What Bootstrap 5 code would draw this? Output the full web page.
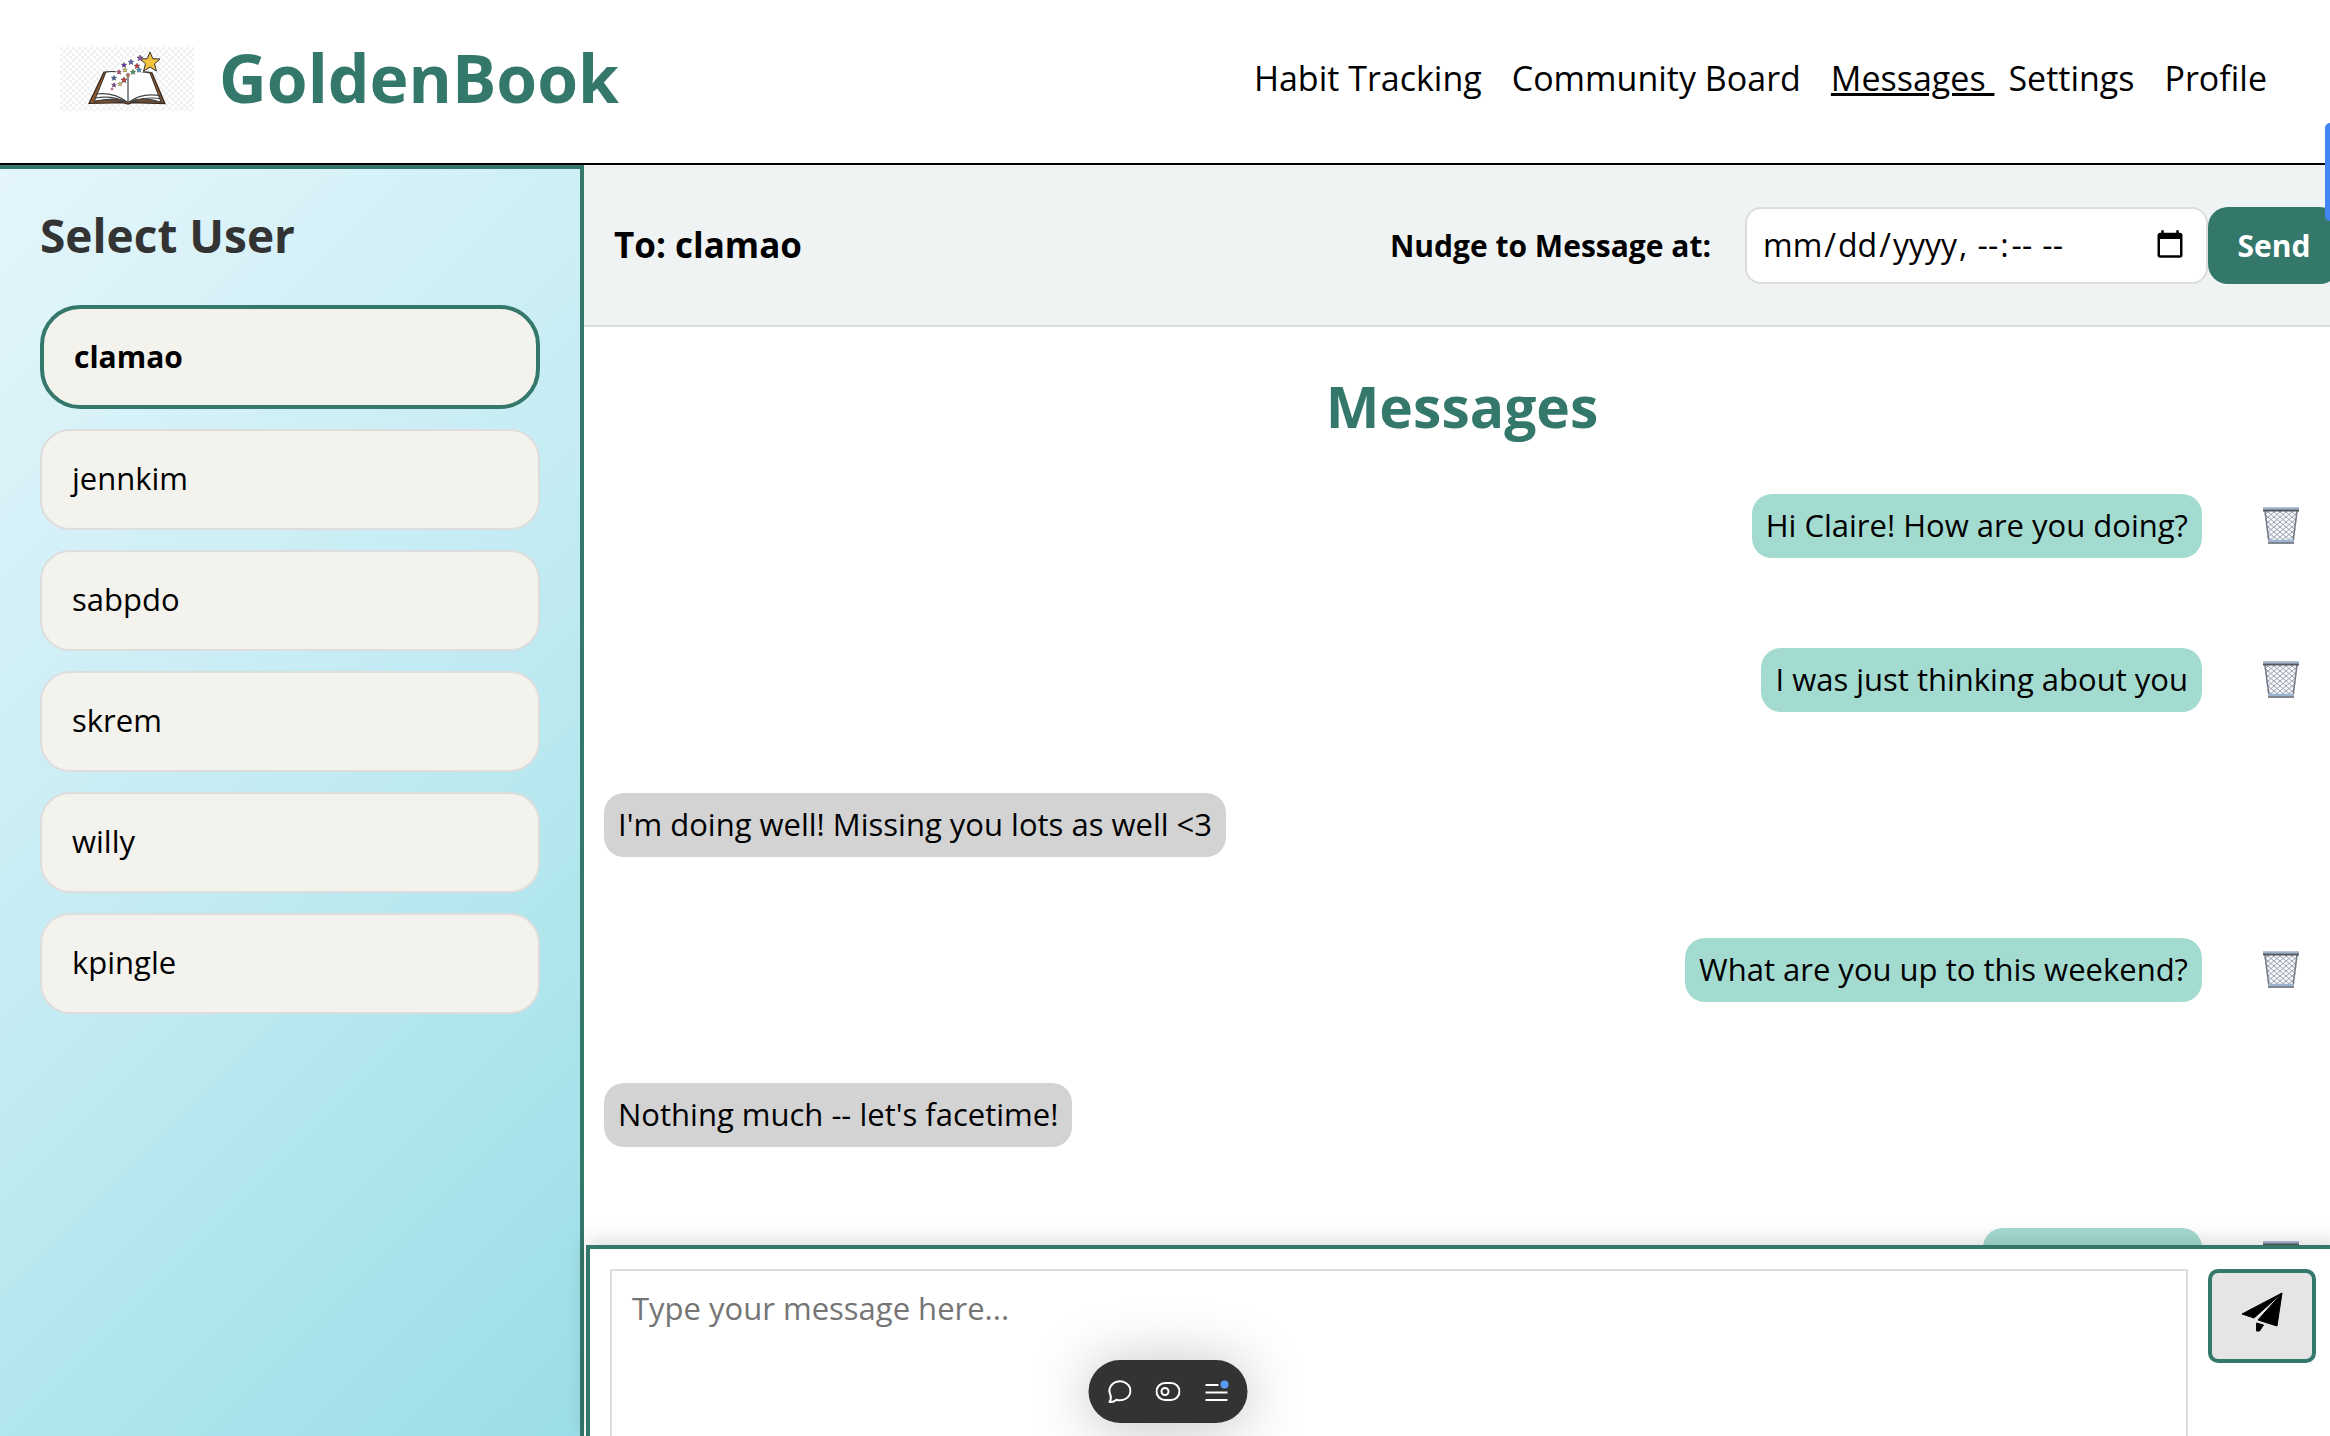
<!DOCTYPE html>
<html lang="en">
<head>
<meta charset="utf-8">
<meta name="viewport" content="width=device-width, initial-scale=1">
<title>GoldenBook - Messages</title>
<link href="https://cdn.jsdelivr.net/npm/bootstrap@5.3.0/dist/css/bootstrap.min.css" rel="stylesheet">
<style>
:root { --gb-green: #34786b; --gb-mint: #a4dbd1; --gb-line: #ddd; }
body { font-family: "Trebuchet MS", "Open Sans", sans-serif; font-size: 31px; line-height: 37px; color: #000; background: #fff; }
.site-header { height: 165px; border-bottom: 2px solid #000; padding: 0 63px 0 60px; }
.brand { gap: 25px; margin-top: -6px; }
.brand svg { width: 134px; height: 64px; }
.brand-name { font-size: 66px; line-height: 80px; font-weight: 700; color: var(--gb-green); margin-top: -4px; }
.site-nav { gap: 30px; font-size: 34px; line-height: 42px; margin-top: -8px; }
.site-nav a { color: #000; text-decoration: none; white-space: pre; }
.site-nav a.current { text-decoration: underline; text-decoration-thickness: 3px; margin-right: -16px; }
.user-pane { width: 584px; border-top: 4px solid var(--gb-green); border-right: 4px solid var(--gb-green); padding: 38px 40px; background: linear-gradient(135deg, #e4f6fb 0%, #c3ebf3 49%, #b2e6ed 69%, #9cdde7 100%); }
.user-pane h2 { font-size: 46px; line-height: 56px; font-weight: 700; color: #333; margin: 0 0 42px; }
.user-list { gap: 20px; }
.user-btn { border: 2px solid var(--gb-line); border-radius: 30px; background: #f3f2ec; padding: 29px 30px 31px; text-align: left; color: #000; }
.user-btn.chosen { border: 4px solid var(--gb-green); border-radius: 40px; font-weight: 700; font-size: 30px; line-height: 36px; padding: 30px; }
.chat { margin-right: -10px; }
.chat-bar { height: 162px; background: #f0f3f4; border-bottom: 2px solid var(--gb-line); padding-left: 30px; }
.chat-bar h3 { font-size: 35px; line-height: 40px; font-weight: 700; margin: 0; }
.nudge label { font-weight: 700; margin-right: 34px; font-size: 30px; }
.nudge input { width: 463px; height: 77px; border: 2px solid var(--gb-line); border-radius: 16px; padding: 0 20px 0 16px; background: #fff; color: #000; font-size: 32px; line-height: 48px; }
.nudge input::-webkit-datetime-edit { line-height: 48px; padding: 0; }
.nudge input::-webkit-datetime-edit-text { padding: 0 2px; }
.nudge input::-webkit-calendar-picker-indicator { width: 32px; height: 32px; padding: 0; }
.nudge button { width: 132px; height: 77px; border: 0; border-radius: 20px; background: var(--gb-green); color: #fff; font-weight: 700; font-size: 30px; }
.thread { min-height: 0; padding: 0 40px 0 20px; }
.thread h1 { font-size: 57px; line-height: 74px; font-weight: 700; color: var(--gb-green); margin: 42px -20px 51px 0; }
.msg { height: 64px; margin-bottom: 81px; gap: 60px; }
.msg.spaced { margin-bottom: 90px; }
.bubble { min-height: 64px; line-height: 36px; padding: 13px 14px 15px; border-radius: 20px; background: var(--gb-mint); }
.bubble.pending { width: 219px; }
.msg.theirs .bubble { background: #d3d3d3; }
.bin { border: 0; background: none; padding: 0; width: 38px; line-height: 0; }
.composer { height: 191px; flex: none; margin-left: 2px; border: 4px solid var(--gb-green); border-bottom: 0; background: #fff; padding: 20px 20px 0; gap: 20px; box-shadow: 0 -4px 20px rgba(0,0,0,.15); z-index: 1; }
.composer textarea { height: 200px; border: 2px solid var(--gb-line); padding: 18px 20px; resize: none; line-height: 38px; }
.composer textarea::placeholder { color: #757575; }
.composer button { width: 108px; height: 94px; flex: none; border: 4px solid var(--gb-green); border-radius: 10px; background: #e5e5e5; padding: 0 0 8px; line-height: 0; }
.side-tab { right: 0; top: 123px; width: 5px; height: 98px; background: #4285f4; border-radius: 8px 0 0 8px; z-index: 3; }
.dock { bottom: 13px; left: calc(50% + 3px); transform: translateX(-50%); width: 159px; height: 63px; border-radius: 32px; background: #333; box-shadow: 0 4px 60px rgba(0,0,0,.25); z-index: 4; gap: 24px; }
.dock button { border: 0; background: none; padding: 0; line-height: 0; }
</style>
<script src="https://cdn.jsdelivr.net/npm/bootstrap@5.3.0/dist/js/bootstrap.bundle.min.js"></script>
</head>
<body class="vh-100 overflow-hidden d-flex flex-column position-relative">
<svg width="0" height="0" class="position-absolute" aria-hidden="true">
  <defs>
    <pattern id="mesh" width="6" height="5" patternUnits="userSpaceOnUse"><path d="M0 0l6 5M6 0l-6 5" stroke="#99a2b2" stroke-width="1"/></pattern>
    <symbol id="bin" viewBox="0 0 38 38">
      <path d="M2 3h34l-4 32H6z" fill="#f8f9fb"/><path d="M2 3h34l-4 32H6z" fill="url(#mesh)"/>
      <path d="M3 4l4 31M35 4l-4 31" stroke="#737a86" stroke-width="1.5"/>
      <path d="M1 1.5h36" stroke="#9fb1cb" stroke-width="2.5"/><path d="M1 3.5h36" stroke="#55585e" stroke-width="2"/>
      <path d="M6 34h26" stroke="#9db3d0" stroke-width="2.5"/><path d="M6 36h26" stroke="#666c76" stroke-width="1.6"/>
    </symbol>
  </defs>
</svg>
<header class="site-header d-flex align-items-center justify-content-between flex-shrink-0">
  <div class="brand d-flex align-items-center">
    <svg viewBox="0 0 134 64" role="img" aria-label="Open book with stars">
      <defs><pattern id="checks" width="6" height="6" patternUnits="userSpaceOnUse"><path fill="#f1f1f1" d="M0 0h3v3H0zM3 3h3v3H3z"/></pattern>
      <path id="star" d="M0-10L2.8-3.3 10-3 4.5 1.8 6.4 9 0 5-6.4 9-4.5 1.8-10-3-2.8-3.3z"/></defs>
      <path fill="#fff" d="M0 0h134v64H0z"/><path fill="url(#checks)" d="M0 0h134v64H0z"/>
      <path d="M44 25L29 56.500l34-.8 5 1.500 4-1.500 33 1L92 26l-4-1z" fill="#8b572f" stroke="#33251c" stroke-width="1.200"/>
      <path d="M46 25q12-2 22 4 10-6 22-3l11 29q-19-6-33 0-14-6-34 0z" fill="#fff" stroke="#333" stroke-width="1"/>
      <path d="M68 29v25M36 47q18-2 31 8M35 51q18-3 30 4M34 54q16-2 29 1M101 49q-18-4-32 6M102 52q-16-3-31 3M103 55q-17-2-31 0" fill="none" stroke="#444" stroke-width="1.200"/>
      <path d="M54 29q4-14 24-22l8 6-4 14-14 3-8-4z" fill="#fff"/>
      <g stroke="#333" stroke-width="1">
        <use href="#star" transform="translate(90 15)" fill="#f3c23c"/>
      </g>
      <g stroke="#444" stroke-width="2">
        <use href="#star" transform="translate(80 11) scale(.3)" fill="#a24ac0"/><use href="#star" transform="translate(71 15) scale(.28)" fill="#5a67c8"/>
        <use href="#star" transform="translate(64 18) scale(.26)" fill="#5820c0"/><use href="#star" transform="translate(77 19) scale(.28)" fill="#e03030"/>
        <use href="#star" transform="translate(65 23) scale(.24)" fill="#e8d84b"/><use href="#star" transform="translate(59 25) scale(.24)" fill="#d83a74"/>
        <use href="#star" transform="translate(73 25) scale(.26)" fill="#3aa648"/><use href="#star" transform="translate(79 23) scale(.26)" fill="#29a0cf"/>
        <use href="#star" transform="translate(68 28) scale(.22)" fill="#e0623c"/><use href="#star" transform="translate(54 31) scale(.26)" fill="#3556a8"/>
        <use href="#star" transform="translate(64 33) scale(.3)" fill="#e03030"/><use href="#star" transform="translate(54 38) scale(.24)" fill="#8a3aa8"/>
        <use href="#star" transform="translate(60 37) scale(.22)" fill="#e8c63c"/><use href="#star" transform="translate(52 42) scale(.14)" fill="#e05050"/>
      </g>
    </svg>
    <div class="brand-name">GoldenBook</div>
  </div>
  <nav class="site-nav d-flex" aria-label="Main">
    <a href="#">Habit Tracking</a><a href="#">Community Board</a><a href="#" class="current" aria-current="page">Messages </a><a href="#">Settings</a><a href="#">Profile</a>
  </nav>
</header>
<div class="d-flex flex-grow-1 overflow-hidden">
  <aside class="user-pane flex-shrink-0">
    <h2>Select User</h2>
    <div class="user-list d-flex flex-column">
      <button type="button" class="user-btn chosen">clamao</button>
      <button type="button" class="user-btn">jennkim</button>
      <button type="button" class="user-btn">sabpdo</button>
      <button type="button" class="user-btn">skrem</button>
      <button type="button" class="user-btn">willy</button>
      <button type="button" class="user-btn">kpingle</button>
    </div>
  </aside>
  <main class="chat d-flex flex-column flex-grow-1">
    <div class="chat-bar d-flex align-items-center justify-content-between flex-shrink-0">
      <h3>To: clamao</h3>
      <form class="nudge d-flex align-items-center">
        <label for="nudgeAt">Nudge to Message at:</label>
        <input type="datetime-local" id="nudgeAt">
        <button type="button">Send</button>
      </form>
    </div>
    <section class="thread flex-grow-1 overflow-hidden">
      <h1 class="text-center">Messages</h1>
      <div class="msg spaced d-flex align-items-center justify-content-end"><div class="bubble">Hi Claire! How are you doing?</div><button class="bin" aria-label="Delete"><svg width="38" height="38"><use href="#bin"/></svg></button></div>
      <div class="msg d-flex align-items-center justify-content-end"><div class="bubble">I was just thinking about you</div><button class="bin" aria-label="Delete"><svg width="38" height="38"><use href="#bin"/></svg></button></div>
      <div class="msg theirs d-flex align-items-center"><div class="bubble">I'm doing well! Missing you lots as well &lt;3</div></div>
      <div class="msg d-flex align-items-center justify-content-end"><div class="bubble">What are you up to this weekend?</div><button class="bin" aria-label="Delete"><svg width="38" height="38"><use href="#bin"/></svg></button></div>
      <div class="msg theirs d-flex align-items-center"><div class="bubble">Nothing much -- let's facetime!</div></div>
      <div class="msg d-flex align-items-center justify-content-end"><div class="bubble pending"></div><button class="bin" aria-label="Delete"><svg width="38" height="38"><use href="#bin"/></svg></button></div>
    </section>
    <form class="composer d-flex align-items-start overflow-hidden">
      <textarea class="flex-grow-1" aria-label="Message" placeholder="Type your message here..."></textarea>
      <button type="button" aria-label="Send message"><svg width="42" height="40" viewBox="0 0 42 40"><path d="M41 1L1 22l12 4zM41 1L17 28l19 6zM15.500 31l7 2-4 6h-3z" stroke="#000" stroke-linejoin="round"/></svg></button>
    </form>
  </main>
</div>
<div class="side-tab position-absolute"></div>
<div class="dock position-absolute d-flex align-items-center justify-content-center" role="toolbar" aria-label="Page tools">
  <button aria-label="Comment"><svg width="25" height="25" viewBox="0 0 25 25" fill="none" stroke="#fff" stroke-width="2" stroke-linejoin="round"><path d="M4 16A10.500 9.500 0 1 1 10 20.800Q7 23.500 3 23 5 20 4 16z"/></svg></button>
  <button aria-label="View"><svg width="25" height="20" viewBox="0 0 25 20" fill="none" stroke="#fff" stroke-width="2"><rect x="1" y="1" width="23" height="17" rx="8.500"/><circle cx="9.500" cy="9.500" r="3.500"/></svg></button>
  <button aria-label="Menu"><svg width="25" height="24" viewBox="0 0 25 24"><path d="M1 5h13M1 12.500h22M1 20h22" stroke="#fff" stroke-width="2"/><circle cx="20" cy="4.500" r="4" fill="#5b9bf5"/></svg></button>
</div>
</body>
</html>
